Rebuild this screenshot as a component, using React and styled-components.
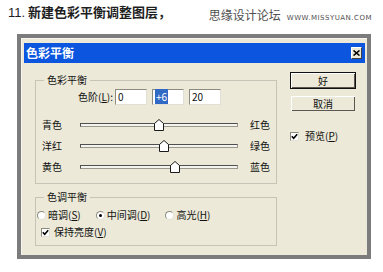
import React from "react"
import styled, { createGlobalStyle } from "styled-components"

const sliders = [
  { left: "青色", right: "红色", value: 0 },
  { left: "洋红", right: "绿色", value: 6 },
  { left: "黄色", right: "蓝色", value: 20 },
]

const tones = [
  { label: "暗调", key: "S", checked: false },
  { label: "中间调", key: "D", checked: true },
  { label: "高光", key: "H", checked: false },
]

const TRACK = 158

export default function App() {
  return (
    <>
      <GlobalStyle />
      <Header>
        <StepTitle>
          <StepNo>11.</StepNo> 新建色彩平衡调整图层，
        </StepTitle>
        <Watermark>
          <SiteName>思缘设计论坛</SiteName>
          <SiteUrl>WWW.MISSYUAN.COM</SiteUrl>
        </Watermark>
      </Header>
      <Frame>
        <Window>
          <TitleBar>
            <Caption>色彩平衡</Caption>
            <CloseButton>
              <svg width="7" height="6" viewBox="0 0 7 6">
                <path d="M0.5 0.5 L6.5 5.5 M6.5 0.5 L0.5 5.5" stroke="#000" strokeWidth="1.6" />
              </svg>
            </CloseButton>
          </TitleBar>
          <Body>
            <LeftColumn>
              <Group>
                <Legend>色彩平衡</Legend>
                <LevelsRow>
                  <Label>色阶(<Key>L</Key>):</Label>
                  <Field>0</Field>
                  <Field>
                    <Selected>+6</Selected>
                  </Field>
                  <Field>20</Field>
                </LevelsRow>
                <Sliders>
                  {sliders.map((s) => (
                    <SliderRow key={s.left}>
                      <Label>{s.left}</Label>
                      <Track>
                        <Thumb style={{ left: TRACK / 2 + (s.value * TRACK) / 200 - 6 }}>
                          <svg width="10" height="12" viewBox="0 0 10 12">
                            <path
                              d="M0.5 11.5 V4.5 L5 0.5 L9.5 4.5 V11.5 Z"
                              fill="#fff"
                              stroke="#1a1a1a"
                              strokeWidth="1"
                            />
                          </svg>
                        </Thumb>
                      </Track>
                      <RightLabel>{s.right}</RightLabel>
                    </SliderRow>
                  ))}
                </Sliders>
              </Group>
              <Group>
                <Legend>色调平衡</Legend>
                <RadioRow>
                  {tones.map((t) => (
                    <Option key={t.key}>
                      <Radio checked={t.checked} />
                      <Label>
                        {t.label}(<Key>{t.key}</Key>)
                      </Label>
                    </Option>
                  ))}
                </RadioRow>
                <CheckRow>
                  <CheckBox>
                    <CheckMark />
                  </CheckBox>
                  <Label>
                    保持亮度(<Key>V</Key>)
                  </Label>
                </CheckRow>
              </Group>
            </LeftColumn>
            <RightColumn>
              <Button $default>好</Button>
              <Button>取消</Button>
              <PreviewRow>
                <CheckBox>
                  <CheckMark />
                </CheckBox>
                <Label>
                  预览(<Key>P</Key>)
                </Label>
              </PreviewRow>
            </RightColumn>
          </Body>
        </Window>
      </Frame>
    </>
  )
}

const CheckMark = () => (
  <svg width="7" height="7" viewBox="0 0 7 7">
    <path d="M0.8 3.2 L2.7 5.2 L6.2 1.2" fill="none" stroke="#000" strokeWidth="1.6" />
  </svg>
)

const GlobalStyle = createGlobalStyle`
  html, body {
    margin: 0;
    padding: 0;
    background: #fff;
  }
  body {
    width: 383px;
    height: 272px;
    overflow: hidden;
    font-family: "Noto Sans CJK SC", "Liberation Sans", sans-serif;
  }
`

const Header = styled.div`
  height: 34px;
  box-sizing: border-box;
  display: flex;
  justify-content: space-between;
  align-items: flex-start;
  padding: 3px 11px 0 8px;
`

const StepTitle = styled.h1`
  margin: 0;
  font-size: 13px;
  line-height: 17px;
  font-weight: 700;
  color: #1e1e1e;
`

const StepNo = styled.span`
  font-family: "Liberation Sans", sans-serif;
  font-weight: 400;
  font-size: 13px;
`

const Watermark = styled.div`
  display: flex;
  align-items: baseline;
  gap: 6px;
  margin-top: 5px;
  color: #505050;
`

const SiteName = styled.span`
  font-size: 12px;
  line-height: 14px;
`

const SiteUrl = styled.span`
  font-family: "DejaVu Sans", sans-serif;
  font-size: 7px;
  letter-spacing: 0.5px;
`

const Frame = styled.div`
  margin-left: 17px;
  width: 354px;
  height: 225px;
  box-sizing: border-box;
  background: #7c7c7c;
  padding: 4px;
`

const Window = styled.div`
  height: 100%;
  box-sizing: border-box;
  background: #ece9d8;
  border-top: 1px solid #f6f5ef;
  border-left: 1px solid #f6f5ef;
  padding: 4px 2px 0 2px;
  display: flex;
  flex-direction: column;
`

const TitleBar = styled.div`
  height: 20px;
  flex: none;
  background: #0b55df;
  display: flex;
  align-items: center;
  justify-content: space-between;
  padding: 0 3px 0 2px;
`

const Caption = styled.span`
  color: #fff;
  font-size: 12px;
  font-weight: 700;
  line-height: 14px;
`

const CloseButton = styled.div`
  width: 11px;
  height: 12px;
  box-sizing: border-box;
  background: #ece9d8;
  border: 1px solid;
  border-color: #fff #404040 #404040 #fff;
  display: flex;
  align-items: center;
  justify-content: center;
`

const Body = styled.div`
  display: flex;
  padding: 11px 0 0 11px;
`

const LeftColumn = styled.div`
  width: 242px;
  display: flex;
  flex-direction: column;
  gap: 7px;
`

const Group = styled.fieldset`
  margin: 0;
  padding: 0 0 6px 0;
  border: 1px solid #c7c4b7;
  min-width: 0;
`

const Legend = styled.legend`
  margin-left: 8px;
  padding: 0 3px;
  font-size: 10px;
  line-height: 12px;
  color: #111;
`

const Label = styled.span`
  font-size: 10px;
  line-height: 12px;
  color: #111;
  white-space: nowrap;
`

const RightLabel = styled(Label)`
  margin-left: 12px;
`

const Key = styled.span`
  text-decoration: underline;
`

const LevelsRow = styled.div`
  display: flex;
  align-items: center;
  gap: 5px;
  margin-top: 3px;
  padding-left: 42px;

  & > ${Label} {
    margin-right: -3px;
  }
`

const Field = styled.div`
  width: 32px;
  height: 16px;
  box-sizing: border-box;
  background: #fff;
  border: 1px solid;
  border-color: #8d8b80 #e2e0d6 #e2e0d6 #8d8b80;
  padding: 0 2px;
  font-size: 10px;
  line-height: 14px;
  color: #111;
`

const Selected = styled.span`
  background: #316ac5;
  color: #fff;
  padding: 0 1px;
`

const Sliders = styled.div`
  margin-top: 9px;
  display: flex;
  flex-direction: column;
`

const SliderRow = styled.div`
  height: 21px;
  display: grid;
  grid-template-columns: 38px ${TRACK}px auto;
  align-items: center;
  padding-left: 6px;
`

const Track = styled.div`
  position: relative;
  height: 4px;
  box-sizing: border-box;
  border: 1px solid;
  border-color: #505050 #9a988d #9a988d #505050;
  background: #f4f3ee;
`

const Thumb = styled.div`
  position: absolute;
  top: -5px;
  width: 10px;
  height: 12px;
  line-height: 0;
`

const RadioRow = styled.div`
  display: flex;
  align-items: center;
  gap: 15px;
  margin-top: 5px;
  padding-left: 1px;
  height: 14px;
`

const Option = styled.div`
  display: flex;
  align-items: center;
  gap: 2px;
`

const Radio = styled.span`
  width: 9px;
  height: 9px;
  box-sizing: border-box;
  border-radius: 50%;
  background: #fff;
  border: 1px solid;
  border-color: #8d8b80 #e2e0d6 #e2e0d6 #8d8b80;
  display: flex;
  align-items: center;
  justify-content: center;

  &::after {
    content: "";
    width: 3px;
    height: 3px;
    border-radius: 50%;
    background: ${(p) => (p.checked ? "#000" : "transparent")};
  }
`

const CheckRow = styled.div`
  display: flex;
  align-items: center;
  gap: 4px;
  margin-top: 3px;
  padding-left: 5px;
  height: 14px;
`

const CheckBox = styled.span`
  width: 9px;
  height: 9px;
  box-sizing: border-box;
  background: #fff;
  border: 1px solid;
  border-color: #8d8b80 #e2e0d6 #e2e0d6 #8d8b80;
  display: flex;
  align-items: center;
  justify-content: center;
`

const RightColumn = styled.div`
  margin: -2px 0 0 13px;
  width: 66px;
  display: flex;
  flex-direction: column;
  gap: 6px;
`

const Button = styled.div`
  height: 17px;
  box-sizing: border-box;
  background: #ece9d8;
  border: 1px solid ${(p) => (p.$default ? "#111" : "#ece9d8")};
  box-shadow: inset 1px 1px 0 #fff, inset -1px -1px 0 #5a5850;
  display: flex;
  align-items: center;
  justify-content: center;
  font-size: 10px;
  color: #111;
`

const PreviewRow = styled.div`
  display: flex;
  align-items: center;
  gap: 6px;
  margin-top: 11px;
  height: 14px;
`
